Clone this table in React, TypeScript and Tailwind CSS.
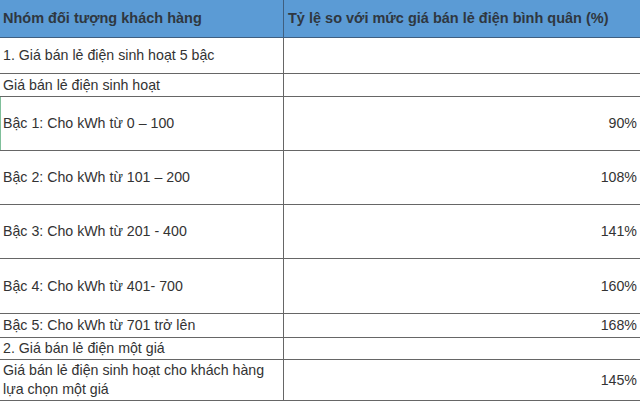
import React from "react";

type Row = { label: React.ReactNode; value: string; h: string };

const rows: Row[] = [
  { label: "1. Giá bán lẻ điện sinh hoạt 5 bậc", value: "", h: "h-[36px]" },
  { label: "Giá bán lẻ điện sinh hoạt", value: "", h: "h-[23px]" },
  { label: "Bậc 1: Cho kWh từ 0 – 100", value: "90%", h: "h-[54px]" },
  { label: "Bậc 2: Cho kWh từ 101 – 200", value: "108%", h: "h-[54px]" },
  { label: "Bậc 3: Cho kWh từ 201 - 400", value: "141%", h: "h-[54px]" },
  { label: "Bậc 4: Cho kWh từ 401- 700", value: "160%", h: "h-[55px]" },
  { label: "Bậc 5: Cho kWh từ 701 trở lên", value: "168%", h: "h-[24px]" },
  { label: "2. Giá bán lẻ điện một giá", value: "", h: "h-[22px]" },
  {
    label: (
      <>
        Giá bán lẻ điện sinh hoạt cho khách hàng
        <br />
        lựa chọn một giá
      </>
    ),
    value: "145%",
    h: "h-[41px]",
  },
];

export default function App() {
  return (
    <div
      className="w-[640px] h-[402px] overflow-hidden bg-white text-[#333] text-[14.2px] leading-[19px]"
      style={{ fontFamily: '"Liberation Sans", Arial, sans-serif' }}
    >
      <div className="flex h-[38px] bg-[#5b9bd5] border-b border-[#3f5f80] font-bold text-[#2f3740] text-[14.5px]">
        <div className="w-[284px] shrink-0 border-r border-[#3f5f80] flex items-center pl-[3px]">
          Nhóm đối tượng khách hàng
        </div>
        <div className="flex-1 flex items-center pl-[4px]">
          Tỷ lệ so với mức giá bán lẻ điện bình quân (%)
        </div>
      </div>
      {rows.map((r, i) => (
        <div key={i} className={`flex ${r.h} border-b border-[#666]`}>
          <div className="w-[284px] shrink-0 border-r border-[#666] flex items-center pl-[3px] relative">
            {i === 2 && <div className="absolute left-0 top-0 bottom-0 w-px bg-[#7fbf9a]" />}
            <div>{r.label}</div>
          </div>
          <div className="flex-1 flex items-center justify-end pr-[3px]">{r.value}</div>
        </div>
      ))}
    </div>
  );
}
